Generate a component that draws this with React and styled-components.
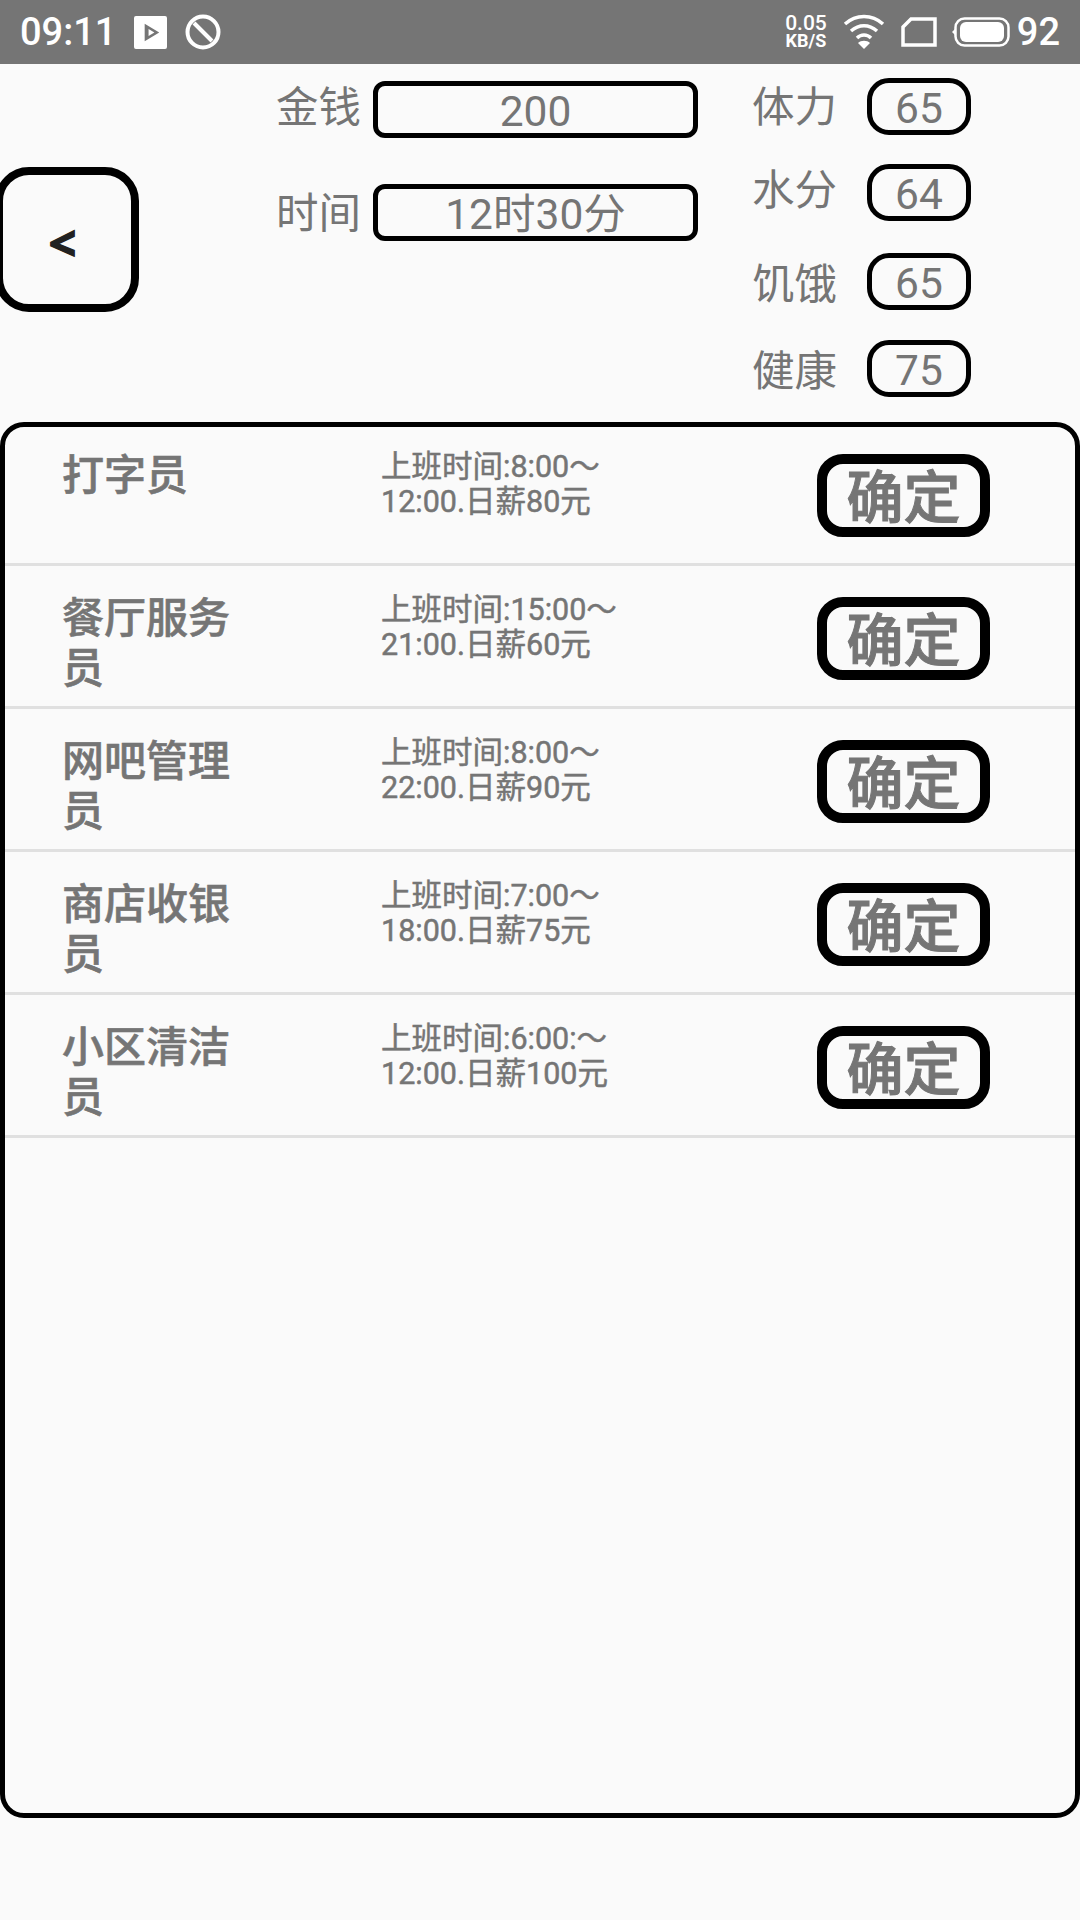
import React from 'react';
import styled, { createGlobalStyle } from 'styled-components';

const jobs = [
  { name: '打字员', info: '上班时间:8:00～12:00.日薪80元' },
  { name: '餐厅服务员', info: '上班时间:15:00～21:00.日薪60元' },
  { name: '网吧管理员', info: '上班时间:8:00～22:00.日薪90元' },
  { name: '商店收银员', info: '上班时间:7:00～18:00.日薪75元' },
  { name: '小区清洁员', info: '上班时间:6:00:～12:00.日薪100元' },
];

const stats = [
  { label: '体力', value: 65, top: 14, shift: 3 },
  { label: '水分', value: 64, top: 29, shift: 0 },
  { label: '饥饿', value: 65, top: 32, shift: 5 },
  { label: '健康', value: 75, top: 30, shift: 5 },
];

export default function App() {
  return (
    <Page>
      <GlobalStyle />
      <StatusBar>
        <StatusGroup>
          <Clock>09:11</Clock>
          <svg width="33" height="33" viewBox="0 0 34 34">
            <path fillRule="evenodd" fill="#fff" d="M2 0h30a2 2 0 0 1 2 2v30a2 2 0 0 1-2 2H2a2 2 0 0 1-2-2V2a2 2 0 0 1 2-2zM11 8v18l15-9z" />
            <path fill="#fff" d="M15 13.5v7l6-3.5z" />
          </svg>
          <NoDisturb viewBox="0 0 36 36" width="36" height="36">
            <circle cx="18" cy="18" r="15.5" fill="none" stroke="#fff" strokeWidth="4" />
            <path d="M9 9l18 18" stroke="#fff" strokeWidth="4" />
          </NoDisturb>
        </StatusGroup>
        <StatusGroup>
          <Speed>
            <span>0.05</span>
            <small>KB/S</small>
          </Speed>
          <WifiIcon viewBox="0 0 42 36" width="42" height="36">
            <path d="M2 10C13 0 29 0 40 10" fill="none" stroke="#fff" strokeWidth="3.5" />
            <path d="M8 17C16 10 26 10 34 17" fill="none" stroke="#fff" strokeWidth="3.5" />
            <path d="M14 24C18 20 24 20 28 24" fill="none" stroke="#fff" strokeWidth="3.5" />
            <path d="M21 35l-6-6c3-3 9-3 12 0z" fill="#fff" />
          </WifiIcon>
          <SimIcon viewBox="0 0 36 30" width="36" height="30">
            <path d="M10 2h24v26H2V10z" fill="none" stroke="#fff" strokeWidth="3.5" />
          </SimIcon>
          <BatteryIcon viewBox="0 0 58 30" width="58" height="30">
            <path d="M0 15l3-3v6z" fill="#fff" />
            <rect x="3.5" y="1.5" width="53" height="27" rx="9" fill="none" stroke="#fff" strokeWidth="2.5" />
            <rect x="8" y="5" width="44" height="20" rx="6" fill="#fff" />
          </BatteryIcon>
          <Level>92</Level>
        </StatusGroup>
      </StatusBar>

      <Header>
        <BackButton>&lt;</BackButton>
        <Resources>
          <ResourceRow>
            <FieldLabel $shift={0}>金钱</FieldLabel>
            <ResourceBox>200</ResourceBox>
          </ResourceRow>
          <ResourceRow>
            <FieldLabel $shift={3}>时间</FieldLabel>
            <ResourceBox>12时30分</ResourceBox>
          </ResourceRow>
        </Resources>
        <Stats>
          {stats.map((s) => (
            <StatRow key={s.label} $top={s.top}>
              <FieldLabel $shift={s.shift}>{s.label}</FieldLabel>
              <StatBox>{s.value}</StatBox>
            </StatRow>
          ))}
        </Stats>
      </Header>

      <Panel>
        {jobs.map((job) => (
          <JobRow key={job.name}>
            <JobName>{job.name}</JobName>
            <JobInfo>{job.info}</JobInfo>
            <ConfirmButton>确定</ConfirmButton>
          </JobRow>
        ))}
      </Panel>
    </Page>
  );
}

const GlobalStyle = createGlobalStyle`
  html, body {
    margin: 0;
    padding: 0;
    background: #fafafa;
  }
  * {
    box-sizing: border-box;
  }
`;

const Page = styled.div`
  width: 1080px;
  height: 1920px;
  overflow: hidden;
  background: #fafafa;
  color: #757575;
  font-family: Roboto, "Noto Sans CJK SC", sans-serif;
`;

const StatusBar = styled.div`
  height: 64px;
  padding: 0 20px;
  background: #757575;
  color: #fff;
  display: flex;
  align-items: center;
  justify-content: space-between;
`;

const StatusGroup = styled.div`
  display: flex;
  align-items: center;
`;

const Clock = styled.div`
  font-size: 38px;
  font-weight: 500;
  margin-right: 18px;
`;

const NoDisturb = styled.svg`
  margin-left: 18px;
`;

const Speed = styled.div`
  display: flex;
  flex-direction: column;
  align-items: center;
  font-size: 21px;
  font-weight: 500;
  line-height: 17px;
  margin-right: 16px;
  small {
    font-size: 18px;
    font-weight: 700;
  }
`;

const WifiIcon = styled.svg`
  margin-right: 16px;
`;

const SimIcon = styled.svg`
  margin-right: 15px;
`;

const BatteryIcon = styled.svg`
  margin-right: 7px;
`;

const Level = styled.div`
  font-size: 38px;
  font-weight: 500;
`;

const Header = styled.div`
  height: 358px;
  display: flex;
  align-items: flex-start;
`;

const BackButton = styled.div`
  flex: none;
  width: 144px;
  height: 145px;
  margin: 103px 0 0 -5px;
  border: 8px solid #000;
  border-radius: 34px;
  display: flex;
  align-items: center;
  justify-content: center;
  padding: 6px 9px 0 0;
  color: #212121;
  font-family: "Noto Sans", sans-serif;
  font-size: 48px;
  font-weight: 700;
  -webkit-text-stroke: 1.5px #212121;
`;

const Resources = styled.div`
  width: 422px;
  margin: 17px 0 0 137px;
  display: flex;
  flex-direction: column;
  gap: 46px;
`;

const ResourceRow = styled.div`
  display: flex;
  align-items: center;
  gap: 11px;
`;

const FieldLabel = styled.div`
  flex: none;
  width: 86px;
  white-space: nowrap;
  font-size: 42.5px;
  line-height: 50px;
  position: relative;
  top: ${(p) => p.$shift - 2}px;
`;

const ResourceBox = styled.div`
  width: 325px;
  height: 57px;
  border: 5px solid #000;
  border-radius: 12px;
  font-size: 42.5px;
  line-height: 52px;
  text-align: center;
`;

const Stats = styled.div`
  margin-left: 54px;
  display: flex;
  flex-direction: column;
`;

const StatRow = styled.div`
  display: flex;
  align-items: center;
  gap: 29px;
  margin-top: ${(p) => p.$top}px;
`;

const StatBox = styled.div`
  width: 104px;
  height: 57px;
  border: 5px solid #000;
  border-radius: 22px;
  font-size: 42.5px;
  line-height: 51px;
  text-align: center;
`;

const Panel = styled.div`
  height: 1396px;
  border: 5px solid #000;
  border-radius: 24px;
  display: flex;
  flex-direction: column;
`;

const JobRow = styled.div`
  height: 143px;
  flex: none;
  display: flex;
  align-items: flex-start;
  border-bottom: 3px solid #e0e0e0;
  &:first-child {
    margin-top: -4px;
  }
`;

const JobName = styled.div`
  width: 171px;
  margin: 28px 0 0 57px;
  font-size: 42px;
  font-weight: 500;
  line-height: 50px;
  -webkit-text-stroke: 0.6px #757575;
`;

const JobInfo = styled.div`
  width: 245px;
  margin: 26px 0 0 148px;
  font-size: 30.5px;
  font-weight: 400;
  line-height: 35px;
  -webkit-text-stroke: 0.5px #757575;
`;

const ConfirmButton = styled.div`
  width: 173px;
  height: 83px;
  margin: 31px 0 0 191px;
  flex: none;
  border: 10px solid #000;
  border-radius: 26px;
  display: flex;
  align-items: center;
  justify-content: center;
  padding-bottom: 6px;
  font-size: 57px;
  font-weight: 500;
  -webkit-text-stroke: 1px #757575;
`;
